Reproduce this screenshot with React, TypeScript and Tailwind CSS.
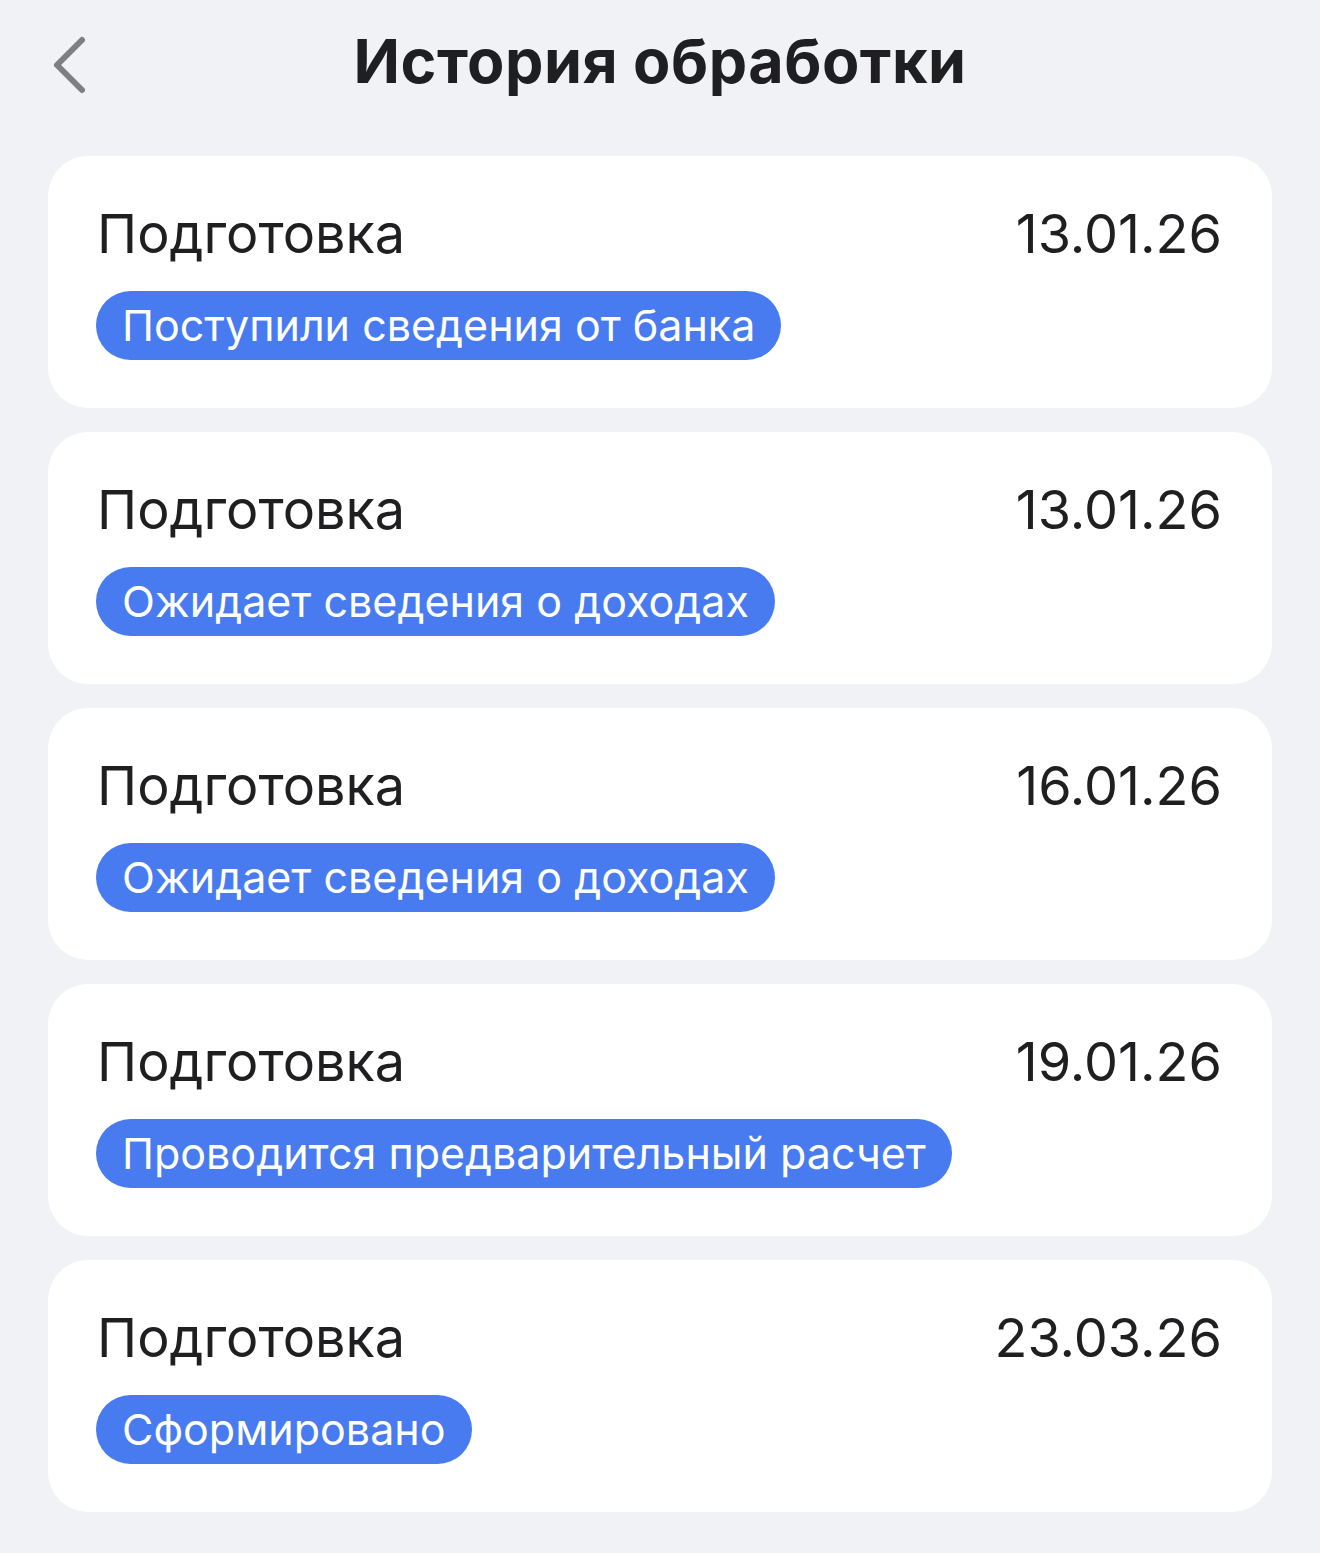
const items = [
  { date: "13.01.26", status: "Поступили сведения от банка" },
  { date: "13.01.26", status: "Ожидает сведения о доходах" },
  { date: "16.01.26", status: "Ожидает сведения о доходах" },
  { date: "19.01.26", status: "Проводится предварительный расчет" },
  { date: "23.03.26", status: "Сформировано" },
];

export default function App() {
  return (
    <div className="min-h-[1553px] bg-[#f0f2f6] px-12 font-['Inter',sans-serif] text-[#1f1f21]">
      <header className="relative flex h-[156px] items-start justify-center pt-[23px]">
        <button className="absolute left-[-3px] top-[31px] p-1">
          <svg width="40" height="60" viewBox="0 0 40 60" fill="none">
            <path d="M33 5 L8 30 L33 55" stroke="#7e7e83" strokeWidth="6" strokeLinecap="round" strokeLinejoin="round" />
          </svg>
        </button>
        <h1 className="text-[61px] font-bold leading-[76px] tracking-[0.5px] text-[#1f1f21]">
          История обработки
        </h1>
      </header>

      <div className="flex flex-col gap-6">
        {items.map((it, i) => (
          <div key={i} className="flex h-[252px] flex-col rounded-[40px] bg-white px-[50px] pt-[45px]">
            <div className="flex items-center justify-between">
              <span className="ml-[-1px] text-[54px] leading-[66px]">Подготовка</span>
              <span className="text-[54px] leading-[66px]">{it.date}</span>
            </div>
            <div className="mt-[24px] flex">
              <span className="ml-[-2px] rounded-full bg-[#477bef] px-[26px] text-[43px] leading-[69px] text-white">
                {it.status}
              </span>
            </div>
          </div>
        ))}
      </div>
    </div>
  );
}
